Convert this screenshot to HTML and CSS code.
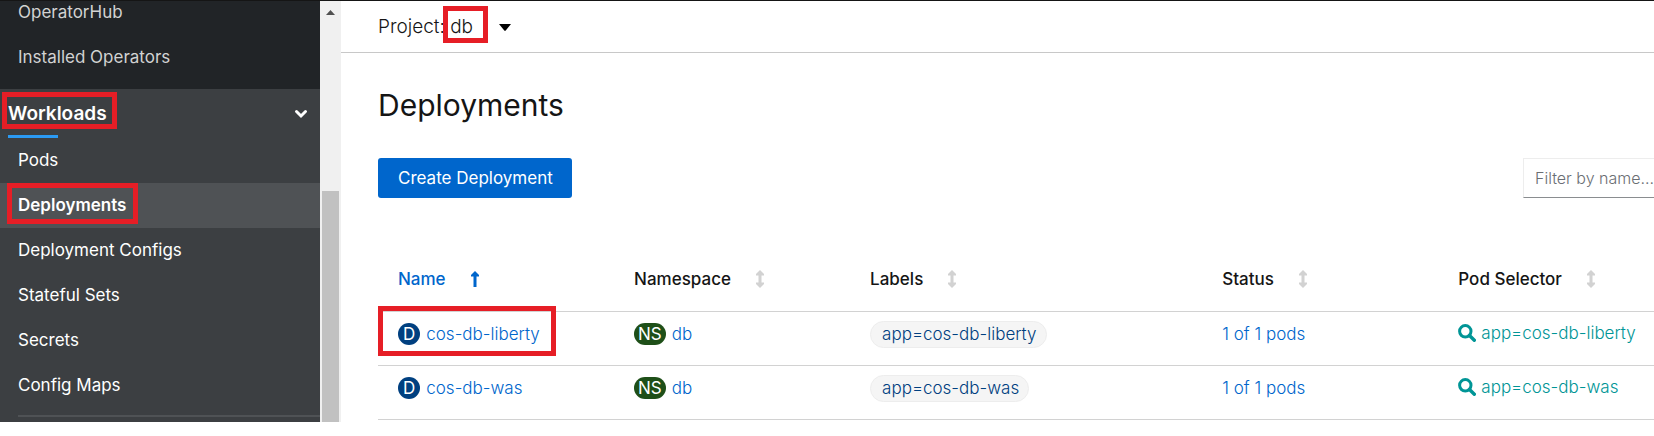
FILE: index.html
```
<!DOCTYPE html>
<html lang="en">
<head>
<meta charset="utf-8">
<title>Deployments</title>
<link rel="stylesheet" href="styles.css">
</head>
<body>
<svg class="symbols">
  <symbol id="sort" viewBox="0 0 8 18"><path d="M4 0 8 4V5.500H5.500V12.500H8V14L4 18 0 14V12.500H2.500V5.500H0V4Z"/></symbol>
  <symbol id="sort-up" viewBox="0 0 8 18"><path d="M4 1 8 5V6.500H5.500V17H2.500V6.500H0V5Z"/></symbol>
  <symbol id="search" viewBox="0 0 18 18"><circle cx="7.300" cy="7.300" r="5.700" fill="none" stroke="currentColor" stroke-width="3"/><path d="M11.500 11.500 16.300 16.300" stroke="currentColor" stroke-width="3.400" stroke-linecap="round"/></symbol>
</svg>
<div class="shell">
  <nav class="sidebar" aria-label="Main">
    <ul class="nav-group">
      <li><a class="nav-link" href="#">OperatorHub</a></li>
      <li><a class="nav-link" href="#">Installed Operators</a></li>
    </ul>
    <section class="nav-section">
      <button class="nav-toggle" aria-expanded="true">
        <span class="marked marked-workloads">Workloads</span>
        <svg class="chevron" viewBox="0 0 14 10" aria-hidden="true"><path d="M2.500 2.500 7 7 11.500 2.500" fill="none" stroke="currentColor" stroke-width="3" stroke-linecap="round"/></svg>
      </button>
      <ul class="nav-list">
        <li><a class="nav-link" href="#">Pods</a></li>
        <li><a class="nav-link current" href="#" aria-current="page"><span class="marked marked-deployments">Deployments</span></a></li>
        <li><a class="nav-link" href="#">Deployment Configs</a></li>
        <li><a class="nav-link" href="#">Stateful Sets</a></li>
        <li><a class="nav-link" href="#">Secrets</a></li>
        <li><a class="nav-link" href="#">Config Maps</a></li>
      </ul>
      <hr class="nav-divider">
    </section>
  </nav>
  <div class="scrollbar" aria-hidden="true">
    <svg class="scroll-arrow" viewBox="0 0 9 5"><path d="M4.500 0 9 5H0Z"/></svg>
    <div class="scroll-thumb"></div>
  </div>
  <main class="main">
    <header class="project-bar">
      <button class="project-button">
        <span>Project: <span class="marked marked-project">db</span></span>
        <svg class="caret" viewBox="0 0 12 7" aria-hidden="true"><path d="M0 0H12L6.700 6.600Q6 7.300 5.300 6.600Z"/></svg>
      </button>
    </header>
    <div class="content">
      <h1 class="title">Deployments</h1>
      <div class="toolbar">
        <button class="create">Create Deployment</button>
        <input class="filter" type="text" placeholder="Filter by name..." aria-label="Filter by name">
      </div>
      <table class="table">
        <colgroup><col class="col-name"><col class="col-namespace"><col class="col-labels"><col class="col-status"><col></colgroup>
        <thead>
          <tr>
            <th aria-sort="ascending"><a class="sort sorted" href="#">Name<svg class="sort-icon" aria-hidden="true"><use href="#sort-up"/></svg></a></th>
            <th><a class="sort" href="#">Namespace<svg class="sort-icon" aria-hidden="true"><use href="#sort"/></svg></a></th>
            <th><a class="sort" href="#">Labels<svg class="sort-icon" aria-hidden="true"><use href="#sort"/></svg></a></th>
            <th><a class="sort" href="#">Status<svg class="sort-icon" aria-hidden="true"><use href="#sort"/></svg></a></th>
            <th><a class="sort" href="#">Pod Selector<svg class="sort-icon" aria-hidden="true"><use href="#sort"/></svg></a></th>
          </tr>
        </thead>
        <tbody>
          <tr>
            <td class="marked marked-row"><div class="resource"><span class="badge">D</span><a class="link" href="#">cos-db-liberty</a></div></td>
            <td><div class="resource"><span class="badge badge-ns">NS</span><a class="link" href="#">db</a></div></td>
            <td><a class="label" href="#">app=cos-db-liberty</a></td>
            <td><a class="link" href="#">1 of 1 pods</a></td>
            <td><a class="selector" href="#"><svg class="search" aria-hidden="true"><use href="#search"/></svg>app=cos-db-liberty</a></td>
          </tr>
          <tr>
            <td><div class="resource"><span class="badge">D</span><a class="link" href="#">cos-db-was</a></div></td>
            <td><div class="resource"><span class="badge badge-ns">NS</span><a class="link" href="#">db</a></div></td>
            <td><a class="label" href="#">app=cos-db-was</a></td>
            <td><a class="link" href="#">1 of 1 pods</a></td>
            <td><a class="selector" href="#"><svg class="search" aria-hidden="true"><use href="#search"/></svg>app=cos-db-was</a></td>
          </tr>
        </tbody>
      </table>
    </div>
  </main>
</div>
</body>
</html>
```
FILE: styles.css
```
* { box-sizing: border-box; }
body {
  margin: 0;
  background: #fff;
  color: #151515;
  font: 400 17px/24px Inter, "Liberation Sans", sans-serif;
}
button, input { font: inherit; }
a { text-decoration: none; }
ul { list-style: none; margin: 0; padding: 0; }
.symbols { display: none; }
.shell {
  display: flex;
  border-top: 1px solid #151515;
  overflow: hidden;
}

.sidebar {
  flex: 0 0 320px;
  background: #212427;
  color: #d2d2d2;
}
.nav-group { margin-top: -11px; padding-bottom: 9px; }
.nav-link {
  display: flex;
  align-items: center;
  height: 45px;
  padding: 0 0 2px 18px;
  color: inherit;
}
.nav-section { background: #3c3f42; color: #fff; padding-bottom: 5px; }
.nav-toggle {
  display: flex;
  justify-content: space-between;
  align-items: center;
  position: relative;
  width: 100%;
  height: 49px;
  padding: 1px 12px 0 8px;
  border: 0;
  background: none;
  color: inherit;
  font-size: 19px;
  font-weight: 600;
}
.nav-toggle::after {
  content: "";
  position: absolute;
  left: 8px;
  bottom: 0;
  width: 50px;
  height: 3px;
  background: #2b9af3;
}
.chevron { width: 14px; height: 10px; }
.current { background: #4f5255; font-weight: 600; }
.nav-divider { height: 2px; margin: 7px 0 0 18px; border: 0; background: #4f5255; }

.marked { position: relative; }
.marked::after {
  content: "";
  position: absolute;
  border: 5px solid #e61e26;
  pointer-events: none;
}
.marked-workloads::after { inset: -10px -10px -3px -6px; }
.marked-deployments::after { inset: -10px -12px -7px -11px; }
.marked-project::after { inset: -9px -15px -5px -7px; }
.marked-row::after { inset: -6px 58px 9px 0; }

.scrollbar {
  display: flex;
  flex-direction: column;
  align-items: center;
  justify-content: space-between;
  flex: 0 0 21px;
  padding-top: 9px;
  background: #f0f0f0;
}
.scroll-arrow { width: 9px; height: 5px; fill: #505050; }
.scroll-thumb { width: 17px; height: 231px; background: #c1c1c1; }

.main { flex: 1; min-width: 0; }
.project-bar { padding: 12px 37px 11px; border-bottom: 1px solid #c8c8c8; }
.project-button {
  display: flex;
  align-items: center;
  gap: 26px;
  padding: 0;
  border: 0;
  background: none;
  color: #151515;
  font-size: 19px;
  font-weight: 300;
  line-height: 28px;
}
.caret { width: 12px; height: 7px; }
.content { padding-left: 37px; }
.title { margin: 0; padding: 33px 0; font-size: 30px; font-weight: 400; line-height: 39px; }
.toolbar { display: flex; justify-content: space-between; }
.create {
  height: 40px;
  padding: 0 19px 0 20px;
  border: 0;
  border-radius: 3px;
  background: #06c;
  color: #fff;
}
.filter {
  width: 131px;
  height: 40px;
  padding: 0 0 0 11px;
  border: 1px solid #ededed;
  border-right: 0;
  border-bottom-color: #8a8d90;
  border-radius: 0;
  font-size: 16px;
  font-weight: 300;
}
.filter::placeholder { color: #6a6e73; }

.table { width: 100%; margin-top: 49px; table-layout: fixed; border-collapse: separate; border-spacing: 0; }
.col-name, .col-namespace, .col-status { width: 18.5%; }
.col-labels { width: 27.600%; }
th, td { padding: 0 0 0 20px; border-bottom: 1px solid #d2d2d2; text-align: left; white-space: nowrap; }
th { height: 65px; font-weight: 500; }
td { height: 54px; padding-bottom: 9px; font-weight: 300; }
.sort { display: inline-flex; align-items: center; gap: 25px; color: #151515; }
.sort-icon { width: 8px; height: 18px; fill: #d2d2d2; }
.sorted, .link { color: #06c; }
.sorted .sort-icon { fill: #06c; }
.resource { display: flex; align-items: center; gap: 6px; }
.badge {
  padding: 0 5px;
  border-radius: 11px;
  background: #004080;
  color: #fff;
  font-weight: 400;
  line-height: 22px;
}
.badge-ns { background: #1e4f18; padding: 0 4px; }
.label {
  display: inline-block;
  padding: 0 9px 0 11px;
  border: 1px solid #ededed;
  border-radius: 14px;
  background: #f5f5f5;
  color: #004080;
  line-height: 25px;
}
.selector { display: inline-flex; align-items: center; gap: 5px; color: #009596; }
.search { width: 18px; height: 18px; }
```
